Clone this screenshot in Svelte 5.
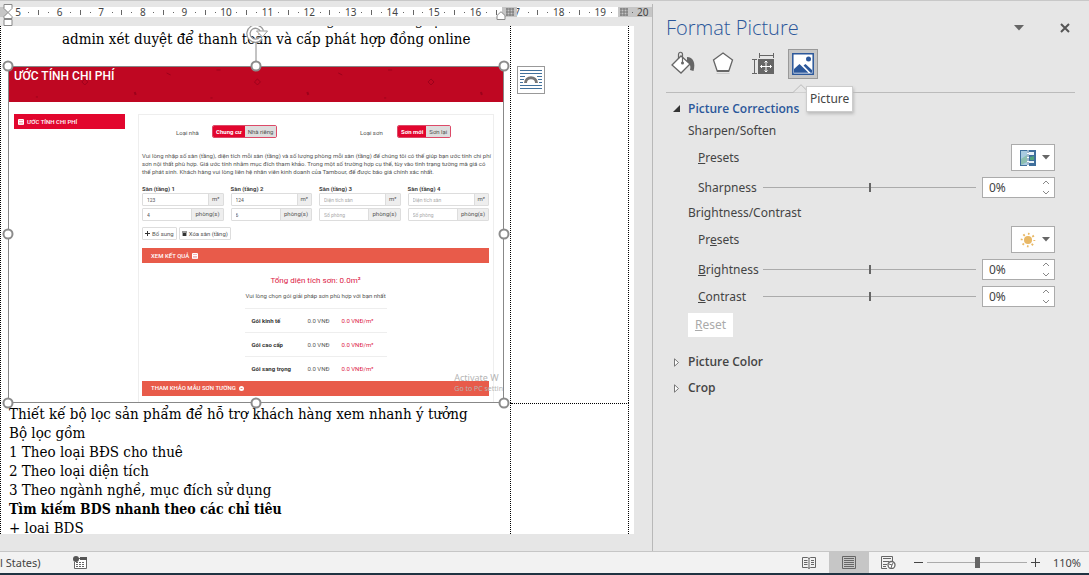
<script>
    // Horizontal ruler labels, in centimetres. The column marker takes the 1 of 17.
    const rulerUnits = [5, 6, 7, 8, 9, 10, 11, 12, 13, 14, 15, 16, 7, 18, 19];

    const notes = [
        "Thiết kế bộ lọc sản phẩm để hỗ trợ khách hàng xem nhanh ý tưởng",
        "Bộ lọc gồm",
        "1 Theo loại BĐS cho thuê",
        "2 Theo loại diện tích",
        "3 Theo ngành nghề, mục đích sử dụng",
    ];

    const intro = [
        "Vui lòng nhập số sàn (tầng), diện tích mỗi sàn (tầng) và số lượng phòng mỗi sàn (tầng) để chúng tôi có thể giúp bạn ước tính chi phí",
        "sơn nội thất phù hợp. Giá ước tính nhằm mục đích tham khảo. Trong một số trường hợp cụ thể, tùy vào tình trạng tường mà giá có",
        "thể phát sinh. Khách hàng vui lòng liên hệ nhân viên kinh doanh của Tambour, để được báo giá chính xác nhất.",
    ];

    let floors = $state([
        { area: "123", rooms: "4" },
        { area: "124", rooms: "6" },
        { area: "", rooms: "" },
        { area: "", rooms: "" },
    ]);

    const packages = ["Gói kinh tế", "Gói cao cấp", "Gói sang trọng"];
    const handles = ["nw", "n", "ne", "w", "e", "sw", "s", "se"];

    let sharpness = $state(0);
    let brightness = $state(0);
    let contrast = $state(0);
    let zoom = $state(110);
</script>

{#snippet calculator()}
    <svg width="6" height="6" viewBox="0 0 6 6" aria-hidden="true">
        <rect width="6" height="6" rx="1" fill="#fff" />
        <path d="M1 1.5h4M1 3.5h4M1 4.8h4" stroke="#e9808a" stroke-width=".6" />
    </svg>
{/snippet}

{#snippet hatch()}
    <svg width="8" height="8" viewBox="0 0 8 8" aria-hidden="true">
        <path d="M1 0v8M4 0v8M7 0v8M0 1h8M0 4h8M0 7h8" stroke="#777" fill="none" />
    </svg>
{/snippet}

{#snippet spinner(id, value, step)}
    <div class="spin">
        <input type="text" {id} value="{value}%" />
        <div class="arrows">
            <button aria-label="Increase" onclick={() => step(1)}>
                <svg width="8" height="5" viewBox="0 0 8 5"><path d="M1 4l3-3 3 3" /></svg>
            </button>
            <button aria-label="Decrease" onclick={() => step(-1)}>
                <svg width="8" height="5" viewBox="0 0 8 5"><path d="M1 1l3 3 3-3" /></svg>
            </button>
        </div>
    </div>
{/snippet}

{#snippet caret()}
    <svg width="8" height="5" viewBox="0 0 8 5" aria-hidden="true"><path d="M0 0h8L4 4.5z" fill="#666" /></svg>
{/snippet}

<div class="word">
    <div class="workspace">
        <main class="document">
            <div class="ruler">
                {#each rulerUnits as unit}
                    <div class="unit">
                        <span>{unit}</span><i></i><i class="half"></i><i></i>
                    </div>
                {/each}
                <div class="margin left"></div>
                <div class="margin column">{@render hatch()}</div>
                <div class="margin right">{@render hatch()}<i></i><span>20</span></div>
                <svg class="indent first" width="10" height="22" viewBox="0 0 10 22">
                    <path
                        d="M1 .5h8v4L5 8.5l4 4v2H1v-2l4-4-4-4zM1 15.5h8v6H1z"
                        fill="#fff"
                        stroke="#888"
                    />
                </svg>
                <svg class="indent last" width="10" height="9" viewBox="0 0 10 9">
                    <path d="M1 8.5v-4L5 .7l4 3.8v4z" fill="#fff" stroke="#888" />
                </svg>
            </div>

            <div class="page">
                <div class="cell">
                    <p class="line item cut">Khách hàng xem mẫu nghệ</p>
                    <p class="line item">
                        admin xét duyệt để thanh toán và cấp phát hợp đồng online
                    </p>

                    <div class="picture">
                        <div class="shot">
                            <header>
                                <h2>ƯỚC TÍNH CHI PHÍ</h2>
                                <svg class="pattern" viewBox="0 0 495 34" aria-hidden="true">
                                    <g fill="none" stroke="#8f0019" opacity=".7">
                                        <path d="M73 15l3-3 3 3-3 3zM246 15l3-3 3 3-3 3zM420 15l3-3 3 3-3 3z" />
                                        <path d="M158 6l4 2M330 6l4 2M208 3h4M380 3h4M27 30h2M202 31h2M376 31h2" />
                                        <path d="M126 25l1 3M299 25l1 3M473 25l1 3" stroke-width="2" />
                                    </g>
                                </svg>
                            </header>
                            <div class="content">
                                <div class="side">{@render calculator()} ƯỚC TÍNH CHI PHÍ</div>
                                <div class="panel">
                                    <div class="choices">
                                        <span class="choice">Loại nhà</span>
                                        <div class="toggle">
                                            <button class="on">Chung cư</button><button>Nhà riêng</button>
                                        </div>
                                        <span class="choice">Loại sơn</span>
                                        <div class="toggle">
                                            <button class="on">Sơn mới</button><button>Sơn lại</button>
                                        </div>
                                    </div>
                                    <p class="intro">
                                        {#each intro as text}<span>{text}</span>{/each}
                                    </p>
                                    <div class="floors">
                                        {#each floors as floor, i}
                                            <div class="floor">
                                                <label for="area{i}">Sàn (tầng) {i + 1}</label>
                                                <div class="group">
                                                    <input id="area{i}" bind:value={floor.area} placeholder="Diện tích sàn" />
                                                    <span>m²</span>
                                                </div>
                                                <div class="group">
                                                    <input
                                                        aria-label="Số phòng"
                                                        bind:value={floor.rooms}
                                                        placeholder="Số phòng"
                                                    />
                                                    <span>phòng(s)</span>
                                                </div>
                                            </div>
                                        {/each}
                                    </div>
                                    <div class="actions">
                                        <button>
                                            <svg width="5" height="5" viewBox="0 0 5 5"><path d="M2.5 0v5M0 2.5h5" stroke="#333" /></svg>
                                            Bổ sung
                                        </button>
                                        <button>
                                            <svg width="5" height="5" viewBox="0 0 5 5"><path d="M0 .5h5v1H0zM.6 2h3.8v3H.6z" fill="#333" /></svg>
                                            Xóa sàn (tầng)
                                        </button>
                                    </div>
                                    <button class="bar">XEM KẾT QUẢ {@render calculator()}</button>
                                    <div class="result">
                                        <h3>Tổng diện tích sơn: 0.0m²</h3>
                                        <p>Vui lòng chọn gói giải pháp sơn phù hợp với bạn nhất</p>
                                        <table>
                                            <tbody>
                                                {#each packages as name}
                                                    <tr>
                                                        <th>{name}</th>
                                                        <td>0.0 VNĐ</td>
                                                        <td class="rate">0.0 VNĐ/m²</td>
                                                    </tr>
                                                {/each}
                                            </tbody>
                                        </table>
                                    </div>
                                    <button class="bar">
                                        THAM KHẢO MẪU SƠN TƯỜNG
                                        <svg width="5" height="5" viewBox="0 0 5 5"><circle cx="2.5" cy="2.5" r="2.5" fill="#fff" /><path d="M1.5 2.5h2" stroke="#e8594a" stroke-width=".7" /></svg>
                                    </button>
                                </div>
                            </div>
                            <div class="watermark">
                                <div>Activate W</div>
                                <small>Go to PC settin</small>
                            </div>
                        </div>
                        {#each handles as side}
                            <span class="handle {side}"></span>
                        {/each}
                        <svg class="rotate" width="24" height="42" viewBox="0 0 24 42" aria-hidden="true">
                            <path d="M12 17v20" stroke="#888" />
                            <path d="M17 14a7 7 0 1 1 1-7" fill="none" stroke="#999" stroke-width="4.5" />
                            <path d="M17 14a7 7 0 1 1 1-7" fill="none" stroke="#fff" stroke-width="2" />
                            <path d="M12.5 7h11l-5 6z" fill="#fff" stroke="#999" />
                        </svg>
                        <button class="layout" aria-label="Layout options">
                            <svg width="22" height="22" viewBox="0 0 22 22">
                                <path
                                    d="M0 1.5h22M0 4.5h22M0 7.5h5M17 7.5h5M0 10.5h4M18 10.5h4M0 13.5h3M19 13.5h3M0 16.5h22M0 19.5h22"
                                    stroke="#41719c"
                                />
                                <path d="M5.5 14c0-7 11-7 11 0" fill="none" stroke="#777" stroke-width="3" />
                            </svg>
                        </button>
                    </div>
                </div>
                <div class="cell aside"></div>

                <div class="cell notes">
                    {#each notes as note}
                        <p class="line">{note}</p>
                    {/each}
                    <p class="line"><strong>Tìm kiếm BDS nhanh theo các chỉ tiêu</strong></p>
                    <p class="line">+ loại BDS</p>
                </div>
                <div class="cell aside lower"></div>
            </div>
        </main>

        <aside class="pane">
            <div class="titlebar">
                <h1>Format Picture</h1>
                <button class="plain" aria-label="Task pane options">
                    <svg width="10" height="6" viewBox="0 0 10 6"><path d="M0 0h10L5 5.5z" fill="#666" /></svg>
                </button>
                <button class="plain" aria-label="Close">
                    <svg width="10" height="10" viewBox="0 0 10 10"><path d="M1 1l8 8M9 1L1 9" stroke="#555" stroke-width="2" /></svg>
                </button>
            </div>

            <div class="tabs">
                <button aria-label="Fill &amp; Line">
                    <svg width="26" height="26" viewBox="0 0 26 26">
                        <path d="M17 6c6 0 9 6 6.500 14l-3.500-1c1-4 0-6-3-8z" fill="#666" />
                        <path d="M2 14L11 5l9 8-9 9z" fill="#fff" stroke="#666" stroke-width="1.3" />
                        <path d="M8.500 8V3.500c0-3 4-3 4 0V12" fill="none" stroke="#666" stroke-width="1.2" />
                        <circle cx="12.500" cy="12" r="1.500" fill="#666" />
                    </svg>
                </button>
                <button aria-label="Effects">
                    <svg width="26" height="26" viewBox="0 0 26 26">
                        <path d="M13 2l9.500 7-3.700 11H7.200L3.500 9z" fill="#fff" stroke="#666" stroke-width="1.3" />
                        <path d="M7 20h12" stroke="#666" stroke-width="2" />
                        <path d="M6.500 22.500h13" stroke="#ccc" />
                    </svg>
                </button>
                <button aria-label="Layout &amp; Properties">
                    <svg width="26" height="26" viewBox="0 0 26 26">
                        <path d="M9 4.500h14M9.500 2v5M23.500 2v5M4.500 8v15M2 8.500h5M2 22.500h5" stroke="#666" fill="none" />
                        <path d="M8 8h16v15H8z" fill="#666" />
                        <path
                            d="M16 10v11M10.500 15.500h11M14.500 11.500L16 10l1.500 1.500M14.500 19.500L16 21l1.500-1.500M12 14l-1.500 1.500L12 17M20 14l1.500 1.500L20 17"
                            stroke="#fff"
                            fill="none"
                        />
                    </svg>
                </button>
                <button class="selected" aria-label="Picture" aria-describedby="tip">
                    <svg width="22" height="22" viewBox="0 0 22 22">
                        <path d="M.8.8h20.400v20.400H.8z" fill="#fff" stroke="#2b579a" stroke-width="1.5" />
                        <path d="M2 19v-3l5.500-5 9 8.800H2zM11.500 12.500l2-1.500 6.500 6v2.800h-1.500z" fill="#2b579a" />
                        <circle cx="16.500" cy="6" r="2.500" fill="#2b579a" />
                    </svg>
                </button>
                <div class="tooltip" role="tooltip" id="tip">Picture</div>
            </div>
            <div class="divider">
                <svg width="18" height="9" viewBox="0 0 18 9"><path d="M0 8.500h1L9 .7l8 7.800h1" fill="#e6e6e6" stroke="#bbb" /></svg>
            </div>

            <button class="section open">
                <svg width="8" height="8" viewBox="0 0 8 8"><path d="M7 0v7H0z" fill="#333" /></svg>
                Picture Corrections
            </button>
            <h4>Sharpen/Soften</h4>
            <div class="row">
                <span class="name"><u>P</u>resets</span>
                <button class="preset" aria-label="Sharpen presets">
                    <svg width="16" height="16" viewBox="0 0 16 16">
                        <path d="M0 0h7v16H0zM9 0h7v16H9z" fill="#3f6f9c" />
                        <path d="M1 1h6v14H1z" fill="#a9cbe0" />
                        <path d="M1 9l6-4v7l-6 3z" fill="#8dbfb0" />
                        <path d="M9 2h5v3H9zM9 11h5v2H9z" fill="#e8f2f8" />
                        <path d="M10 7l4-1v4h-4z" fill="#4fa37c" />
                        <path d="M8 0v16" stroke="#3f6f9c" stroke-dasharray="3 1" />
                    </svg>
                    {@render caret()}
                </button>
            </div>
            <div class="row">
                <label class="name" for="sharp">Sharpness</label>
                <input type="range" min="-100" max="100" bind:value={sharpness} aria-label="Sharpness" />
                {@render spinner("sharp", sharpness, (d) => (sharpness += d))}
            </div>
            <h4>Brightness/Contrast</h4>
            <div class="row">
                <span class="name">Pr<u>e</u>sets</span>
                <button class="preset" aria-label="Brightness presets">
                    <svg width="16" height="16" viewBox="0 0 16 16">
                        <circle cx="8" cy="8" r="4" fill="#e8b866" />
                        <circle cx="8" cy="8" r="6.300" fill="none" stroke="#e8b866" stroke-width="2" stroke-dasharray="1.7 3.248" stroke-dashoffset=".85" />
                    </svg>
                    {@render caret()}
                </button>
            </div>
            <div class="row">
                <label class="name" for="bright"><u>B</u>rightness</label>
                <input type="range" min="-100" max="100" bind:value={brightness} aria-label="Brightness" />
                {@render spinner("bright", brightness, (d) => (brightness += d))}
            </div>
            <div class="row">
                <label class="name" for="contrast"><u>C</u>ontrast</label>
                <input type="range" min="-100" max="100" bind:value={contrast} aria-label="Contrast" />
                {@render spinner("contrast", contrast, (d) => (contrast += d))}
            </div>
            <button class="reset" disabled><u>R</u>eset</button>

            {#each ["Picture Color", "Crop"] as title}
                <button class="section">
                    <svg width="8" height="9" viewBox="0 0 8 9"><path d="M1.500.8l4 3.700-4 3.700z" fill="#fff" stroke="#777" /></svg>
                    {title}
                </button>
            {/each}
        </aside>
    </div>

    <footer class="status">
        <span class="lang">l States)</span>
        <button class="plain macro" aria-label="Record macro">
            <svg width="14" height="13" viewBox="0 0 14 13">
                <path d="M4 2.500h9.500v10h-12V6" fill="#fff" stroke="#666" />
                <path d="M7 1h7v3H7z" fill="#555" />
                <path d="M3 6.500h9M3 8.500h9M3 10.500h9" stroke="#666" stroke-dasharray="2 1" />
                <circle cx="3" cy="3" r="3" fill="#555" />
            </svg>
        </button>
        <div class="views">
            <button aria-label="Read mode">
                <svg width="14" height="13" viewBox="0 0 14 13">
                    <path d="M.5 1.500h5L7 2.500l1.500-1h5v10h-5l-1.500 1-1.500-1h-5zM7 2v10.500M2 4.500h3.500M2 6.500h3.500M2 8.500h3.500M9 4.500h3M9 6.500h3M9 8.500h3" fill="none" stroke="#666" />
                </svg>
            </button>
            <button class="current" aria-label="Print layout">
                <svg width="14" height="13" viewBox="0 0 14 13">
                    <path d="M.5.5h13v12H.5zM2 2.500h10M2 4.500h10M2 6.500h10M2 8.500h10M2 10.500h10" fill="none" stroke="#666" />
                </svg>
            </button>
            <button aria-label="Web layout">
                <svg width="15" height="13" viewBox="0 0 15 13">
                    <path d="M6 12.500H.5V.5h11V5M2 2.500h8M2 5.500h6M2 8.500h4M2 10.500h3" fill="none" stroke="#666" />
                    <circle cx="10.500" cy="9" r="3.500" fill="#fff" stroke="#666" stroke-width="1.3" />
                    <path d="M8 8l3 1 1-2M10 12l1-3" fill="none" stroke="#666" />
                </svg>
            </button>
        </div>
        <div class="zoom">
            <button class="plain" aria-label="Zoom out" onclick={() => (zoom -= 10)}>
                <svg width="9" height="9" viewBox="0 0 9 9"><path d="M0 4.500h9" stroke="#444" /></svg>
            </button>
            <input type="range" min="10" max="206" bind:value={zoom} aria-label="Zoom" />
            <button class="plain" aria-label="Zoom in" onclick={() => (zoom += 10)}>
                <svg width="9" height="9" viewBox="0 0 9 9"><path d="M0 4.500h9M4.500 0v9" stroke="#444" /></svg>
            </button>
            <span>{zoom}%</span>
        </div>
    </footer>
</div>

<style>
    :global(body) {
        margin: 0;
    }

    .word {
        display: flex;
        flex-direction: column;
        height: 100vh;
        box-sizing: border-box;
        border-bottom: 2px solid #1f3342;
        overflow: hidden;
        background: #e6e6e6;
        color: #444;
        font: 12px/16px "Noto Sans", "Open Sans", sans-serif;
    }

    button,
    input {
        font: inherit;
        color: inherit;
        margin: 0;
        padding: 0;
        box-sizing: border-box;
        border-radius: 0;
    }

    button {
        display: flex;
        align-items: center;
        justify-content: center;
        border: 0;
        background: none;
    }

    h1,
    h2,
    h3,
    h4,
    p {
        margin: 0;
        font-weight: normal;
    }

    svg {
        flex: none;
    }

    .workspace {
        flex: 1;
        display: flex;
        min-height: 0;
        border-top: 1px solid #c8c8c8;
    }

    .document {
        flex: 1;
        min-width: 0;
        display: flex;
        flex-direction: column;
        padding: 6px 0 17px;
    }

    /* Ruler */
    .ruler {
        position: relative;
        flex: none;
        display: flex;
        height: 10px;
        margin-bottom: 9px;
        padding-left: 12px;
        background: #fff;
        font-size: 10px;
        line-height: 10px;
    }

    .unit {
        flex: 0 0 6.5%;
        min-width: 0;
        display: grid;
        grid-template-columns: repeat(4, 1fr);
        align-items: center;
        justify-items: center;
    }

    .unit span {
        width: 12px;
        text-align: center;
    }

    .ruler i {
        width: 1px;
        height: 1px;
        background: #666;
    }

    .ruler .half {
        height: 5px;
    }

    .margin {
        position: absolute;
        top: 0;
        bottom: 0;
        display: flex;
        align-items: center;
        background: #c6c6c6;
    }

    .margin.left {
        left: 0;
        width: 8px;
    }

    .margin.column {
        left: 77%;
        width: 15px;
        justify-content: center;
    }

    .margin.right {
        right: 0;
        width: 32px;
        gap: 4px;
        padding-left: 2px;
    }

    .indent {
        position: absolute;
    }

    .indent.first {
        left: 3px;
        top: -3px;
    }

    .indent.last {
        left: 76%;
        top: 4px;
    }

    /* Page and its table */
    .page {
        flex: 1;
        min-height: 0;
        margin-right: 18px;
        display: grid;
        grid-template-columns: 511px 118px;
        grid-template-rows: auto 1fr;
        background: #fff;
        overflow: hidden;
        font-family: "DejaVu Serif Condensed", "DejaVu Serif", serif;
        font-stretch: condensed;
        font-size: 15px;
        color: #000;
    }

    .cell {
        min-width: 0;
        border-left: 1px dotted #000;
        border-right: 1px dotted #000;
    }

    .aside {
        border-left: 0;
    }

    .lower {
        border-top: 1px dotted #000;
    }

    .line {
        line-height: 19px;
        white-space: nowrap;
    }

    .line strong {
        font-size: 14px;
    }

    .item {
        padding-left: 61px;
    }

    .item.cut {
        margin-top: -15px;
        padding: 0 70px 0 0;
        text-align: right;
    }

    .notes {
        padding: 2px 0 0 8px;
    }

    /* Selected picture */
    .picture {
        position: relative;
        margin: 17px 6px 0 7px;
    }

    .shot {
        position: relative;
        border: 1px solid #888;
        overflow: hidden;
        background: #fff;
        font: 6px/8px Roboto, sans-serif;
        color: #555;
    }

    .shot header {
        position: relative;
        height: 35px;
        background: #bf0722;
    }

    .shot h2 {
        padding: 2px 0 0 5px;
        font-size: 12px;
        line-height: 14px;
        font-weight: 500;
        color: #fff;
    }

    .pattern {
        position: absolute;
        inset: 0;
    }

    .content {
        display: flex;
        align-items: flex-start;
        gap: 13px;
        padding: 12px 9px 0 5px;
    }

    .side {
        flex: 0 0 111px;
        box-sizing: border-box;
        display: flex;
        align-items: center;
        gap: 3px;
        height: 15px;
        padding-left: 4px;
        background: #e2062e;
        color: #fff;
        font-weight: 500;
    }

    .panel {
        flex: 1;
        min-width: 0;
        border: 1px solid #eee;
        border-bottom: 0;
        padding: 10px 4px 6px 3px;
    }

    .choices {
        display: grid;
        grid-template-columns: 36px 148px 37px 1fr;
        padding-left: 34px;
        align-items: center;
    }

    .choice {
        padding-top: 3px;
    }

    .toggle {
        display: flex;
        width: max-content;
        border: 1px solid #dc4a68;
        border-radius: 2px;
        overflow: hidden;
    }

    .toggle button {
        height: 11px;
        padding: 0 3px;
        background: #ddd;
    }

    .toggle .on {
        background: #e2062e;
        color: #fff;
        font-weight: 700;
    }

    .intro {
        padding: 14px 0 9px;
        white-space: nowrap;
    }

    .intro span {
        display: block;
    }

    .floors {
        display: grid;
        grid-template-columns: repeat(4, minmax(0, 1fr));
        gap: 7px;
    }

    .floor {
        display: flex;
        flex-direction: column;
        gap: 2px;
    }

    .floor label {
        font-weight: 700;
        margin-bottom: -2px;
        color: #444;
    }

    .group {
        display: flex;
        height: 13px;
        box-sizing: border-box;
        border: 1px solid #ddd;
        border-radius: 1px;
    }

    .group input {
        flex: 1;
        width: 0;
        min-width: 0;
        padding-left: 4px;
        border: 0;
        font-size: 5px;
    }

    .group input::placeholder {
        color: #aaa;
    }

    .group span {
        padding: 1px 3px;
        border-left: 1px solid #ddd;
        background: #eee;
    }

    .actions {
        display: flex;
        gap: 2px;
        padding: 6px 0 8px;
    }

    .actions button {
        height: 13px;
        gap: 2px;
        padding: 0 2px;
        border: 1px solid #ddd;
        border-radius: 1px;
    }

    .bar {
        width: 100%;
        height: 15px;
        justify-content: flex-start;
        gap: 3px;
        padding-left: 9px;
        background: #e85b4a;
        color: #fff;
        font-weight: 500;
    }

    .result {
        display: flex;
        flex-direction: column;
        align-items: center;
    }

    .result h3 {
        padding: 12px 0 5px;
        font-size: 8px;
        line-height: 12px;
        color: #dc2046;
    }

    .result table {
        width: 142px;
        margin-top: 8px;
        border-collapse: collapse;
    }

    .result tr {
        height: 24px;
        border-top: 1px solid #eee;
    }

    .result th,
    .result td {
        padding: 0;
        text-align: left;
    }

    .result th {
        width: 56px;
        padding-left: 7px;
        color: #333;
    }

    .result .rate {
        padding-left: 4px;
        color: #dc2046;
    }

    .watermark {
        position: absolute;
        right: 0;
        bottom: 8px;
        white-space: nowrap;
        color: #b5b5b5;
        font: 9px/12px "Noto Sans", sans-serif;
    }

    .watermark small {
        display: block;
        font-size: 7px;
        line-height: 10px;
    }

    .handle {
        position: absolute;
        width: 7px;
        height: 7px;
        border: 2px solid #8c8c8c;
        border-radius: 50%;
        background: #fff;
        transform: translate(-50%, -50%);
        left: 50%;
        top: 50%;
    }

    .nw,
    .w,
    .sw {
        left: 0;
    }

    .ne,
    .e,
    .se {
        left: 100%;
    }

    .nw,
    .n,
    .ne {
        top: 0;
    }

    .sw,
    .s,
    .se {
        top: 100%;
    }

    .rotate {
        position: absolute;
        left: 50%;
        top: -42px;
        margin-left: -12px;
    }

    .layout {
        position: absolute;
        left: 100%;
        top: 0;
        margin-left: 13px;
        width: 28px;
        height: 28px;
        border: 1px solid #999;
        background: #fff;
    }

    /* Format pane */
    .pane {
        flex: 0 0 437px;
        min-width: 0;
        box-sizing: border-box;
        margin-top: 3px;
        padding: 11px 14px 0 13px;
        border-left: 1px solid #b8b8b8;
    }

    .titlebar {
        display: flex;
        align-items: center;
        gap: 36px;
        padding-right: 5px;
    }

    .titlebar h1 {
        flex: 1;
        font: 300 20px/26px "Open Sans", "Noto Sans", sans-serif;
        color: #2b579a;
    }

    .tabs {
        position: relative;
        display: flex;
        gap: 10px;
        padding: 8px 0 0 2px;
    }

    .tabs button {
        width: 30px;
        height: 30px;
    }

    .tabs .selected {
        border: 1px solid #999;
        background: #c6c6c6;
    }

    .tooltip {
        position: absolute;
        left: 140px;
        top: 45px;
        z-index: 1;
        padding: 4px 3px;
        border: 1px solid #ccc;
        background: #fff;
        box-shadow: 1px 2px 3px #bbb;
    }

    .divider {
        height: 14px;
        display: flex;
        align-items: flex-end;
        padding-left: 126px;
        background: linear-gradient(#bbb, #bbb) bottom / 100% 1px no-repeat;
    }

    .section {
        gap: 7px;
        height: 26px;
        padding-left: 7px;
        font: 600 12px/16px "Open Sans", sans-serif;
    }

    .open {
        margin-top: 3px;
        color: #2b579a;
    }

    h4 {
        padding: 1px 0 5px 22px;
        line-height: 16px;
    }

    .row {
        display: flex;
        align-items: center;
        margin-bottom: 6px;
        padding: 0 20px 0 32px;
    }

    .name {
        flex: 0 0 65px;
    }

    .preset {
        width: 44px;
        height: 27px;
        margin-left: auto;
        gap: 6px;
        padding-left: 4px;
        border: 1px solid #ababab;
        background: #fff;
    }

    input[type="range"] {
        appearance: none;
        height: 11px;
        background: linear-gradient(#ababab, #ababab) center / 100% 1px no-repeat;
    }

    .row input[type="range"] {
        flex: 1;
        width: 0;
        min-width: 0;
        margin-right: 6px;
    }

    input[type="range"]::-webkit-slider-thumb {
        appearance: none;
        width: 2px;
        height: 9px;
        background: #666;
    }

    .spin {
        flex: 0 0 73px;
        min-width: 0;
        height: 21px;
        box-sizing: border-box;
        display: flex;
        border: 1px solid #ababab;
        background: #fff;
    }

    .spin input {
        flex: 1;
        width: 0;
        min-width: 0;
        padding-left: 6px;
        border: 0;
        background: none;
    }

    .arrows {
        width: 16px;
        display: flex;
        flex-direction: column;
    }

    .arrows button {
        flex: 1;
    }

    .arrows path {
        fill: none;
        stroke: #888;
    }

    .reset {
        width: 45px;
        height: 24px;
        margin: 0 0 12px 22px;
        background: #fff;
        color: #aaa;
    }

    /* Status bar */
    .status {
        flex: none;
        display: flex;
        align-items: center;
        height: 21px;
        border-top: 1px solid #c6c6c6;
        background: #f2f2f2;
        font-size: 11px;
    }

    .macro {
        margin-left: 32px;
    }

    .views {
        display: flex;
        margin-left: auto;
        align-self: stretch;
    }

    .views button {
        width: 40px;
    }

    .views .current {
        background: #c6c6c6;
    }

    .zoom {
        display: flex;
        align-items: center;
        gap: 4px;
        padding: 0 8px 0 5px;
    }

    .zoom input {
        width: 100px;
    }

    .zoom input::-webkit-slider-thumb {
        width: 5px;
        height: 11px;
    }

    .zoom span {
        margin-left: 9px;
    }
</style>
